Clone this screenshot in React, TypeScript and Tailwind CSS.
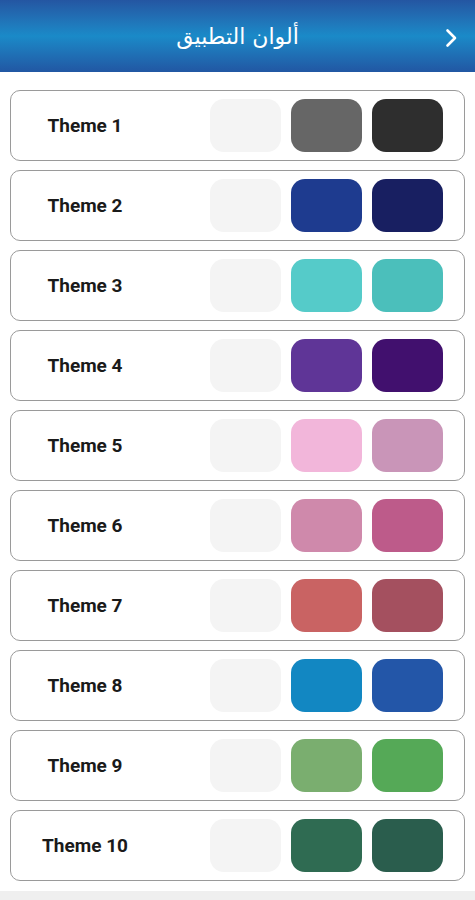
const themes = [
  { name: 'Theme 1', a: 'bg-[#666666]', b: 'bg-[#2e2e2e]' },
  { name: 'Theme 2', a: 'bg-[#1e3b8f]', b: 'bg-[#181f61]' },
  { name: 'Theme 3', a: 'bg-[#55cbc9]', b: 'bg-[#4bbfbb]' },
  { name: 'Theme 4', a: 'bg-[#5f3597]', b: 'bg-[#41106e]' },
  { name: 'Theme 5', a: 'bg-[#f2b6da]', b: 'bg-[#c995b8]' },
  { name: 'Theme 6', a: 'bg-[#cf89ab]', b: 'bg-[#bd5b8a]' },
  { name: 'Theme 7', a: 'bg-[#c96363]', b: 'bg-[#a4505f]' },
  { name: 'Theme 8', a: 'bg-[#1287c2]', b: 'bg-[#2356a8]' },
  { name: 'Theme 9', a: 'bg-[#7aae6f]', b: 'bg-[#55a957]' },
  { name: 'Theme 10', a: 'bg-[#2f6b52]', b: 'bg-[#2a5d4d]' },
];

function ThemeRow({ name, a, b }: { name: string; a: string; b: string }) {
  return (
    <div className="flex h-[71px] items-center rounded-[10px] border border-[#9a9a9a] bg-white">
      <div className="w-[148px] pt-[2px] text-center text-[19px] font-bold text-[#1a1a1a]">{name}</div>
      <div className="ml-[51px] flex gap-[10px]">
        <div className="h-[53px] w-[71px] rounded-[14px] bg-[#f4f4f4]" />
        <div className={`h-[53px] w-[71px] rounded-[14px] ${a}`} />
        <div className={`h-[53px] w-[71px] rounded-[14px] ${b}`} />
      </div>
    </div>
  );
}

export default function App() {
  return (
    <div className="flex h-[900px] w-[475px] flex-col bg-white font-['Roboto','Liberation_Sans',sans-serif]">
      <header className="relative flex h-[72px] items-center justify-center bg-gradient-to-b from-[#2456a2] via-[#1a8ac8] to-[#2157a3]">
        <h1 className="font-['DejaVu_Sans',sans-serif] text-[22px] text-white" dir="rtl">
          ألوان التطبيق
        </h1>
        <svg className="absolute right-[17px] top-[28px]" width="13" height="20" viewBox="0 0 13 20" fill="none">
          <path d="M2.5 2.5 L10 10 L2.5 17.5" stroke="white" strokeWidth="2.6" strokeLinecap="round" strokeLinejoin="round" />
        </svg>
      </header>
      <main className="flex flex-1 flex-col gap-[9px] px-[10px] pt-[18px]">
        {themes.map((t) => (
          <ThemeRow key={t.name} {...t} />
        ))}
      </main>
      <div className="h-[9px] bg-[#efefef]" />
    </div>
  );
}
